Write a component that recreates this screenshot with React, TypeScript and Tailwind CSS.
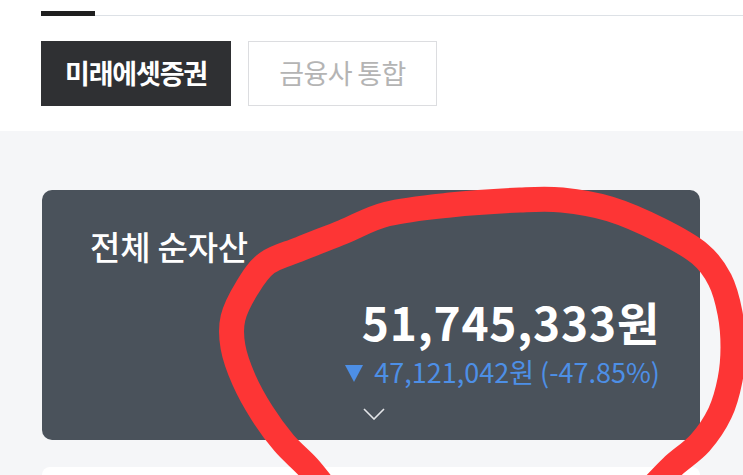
import React from 'react';

const font = { fontFamily: '"Noto Sans CJK KR", "Noto Sans", sans-serif' };

// hand-drawn marker loop, traced from the screenshot
const loop: [number, number][] = [
  [328, 492], [308, 467], [284, 443], [262, 413], [244, 380], [233, 347], [233, 318],
  [247, 288], [267, 263], [300, 249], [343, 232], [387, 214], [450, 205], [520, 200],
  [562, 200], [610, 209], [660, 230], [700, 254], [720, 280], [730, 313], [733, 347],
  [730, 380], [720, 413], [700, 443], [672, 467], [648, 492],
];

const smoothPath = (pts: [number, number][]) => {
  let d = `M ${pts[0][0]} ${pts[0][1]}`;
  for (let i = 0; i < pts.length - 1; i++) {
    const p0 = pts[i - 1] || pts[i];
    const p1 = pts[i];
    const p2 = pts[i + 1];
    const p3 = pts[i + 2] || p2;
    const c1 = [p1[0] + (p2[0] - p0[0]) / 6, p1[1] + (p2[1] - p0[1]) / 6];
    const c2 = [p2[0] - (p3[0] - p1[0]) / 6, p2[1] - (p3[1] - p1[1]) / 6];
    d += ` C ${c1[0]} ${c1[1]}, ${c2[0]} ${c2[1]}, ${p2[0]} ${p2[1]}`;
  }
  return d;
};

const RedCircle = () => (
  <svg
    className="absolute left-0 top-0 pointer-events-none"
    width={743}
    height={475}
    viewBox="0 0 743 475"
  >
    <path
      d={smoothPath(loop)}
      fill="none"
      stroke="#fd3535"
      strokeWidth={25}
      strokeLinecap="round"
      strokeLinejoin="round"
    />
  </svg>
);

export default function App() {
  return (
    <div className="relative w-[743px] h-[475px] overflow-hidden bg-[#f5f6f8]" style={font}>
      {/* top tabs */}
      <div className="bg-white pl-[41px] pt-[10px] pb-[25px]">
        <div className="flex items-end h-[6px]">
          <div className="w-[54px] h-[5px] bg-[#1f1f1f]" />
          <div className="flex-1 h-[1.5px] bg-[#dde1e6]" />
        </div>
        <div className="flex gap-[17px] mt-[25px]">
          <button className="w-[190px] h-[65px] bg-[#2f3033] text-white text-[27px] font-bold tracking-[-1.2px]">
            미래에셋증권
          </button>
          <button className="w-[189px] h-[65px] bg-white border border-[#dcdde0] text-[#b4b4b4] text-[27px] tracking-[-0.6px]">
            금융사 통합
          </button>
        </div>
      </div>

      {/* summary card */}
      <div className="px-[42px] pt-[59px]">
        <div className="w-[658px] h-[250px] rounded-[10px] bg-[#4a525b] pl-[48px] pr-[40px] pt-[36px] flex flex-col">
          <div className="text-white text-[33px] font-medium leading-[40px] tracking-[-0.2px]">전체 순자산</div>
          <div className="flex flex-col items-end mt-[27px]">
            <div className="text-white text-[46px] font-bold leading-[56px] tracking-[0.8px]">51,745,333원</div>
            <div className="flex items-center text-[#4d8fe6] text-[27px] leading-[32px] mt-[7px]">
              <svg width="18" height="18" viewBox="0 0 18 18" className="mr-[11px] mt-[2px]">
                <path d="M0 1 L18 1 L9 18 Z" fill="#4d8fe6" />
              </svg>
              <span>47,121,042원 (-47.85%)</span>
            </div>
          </div>
          <div className="pl-[273px] mt-[20px]">
            <svg width="22" height="12" viewBox="0 0 22 12" fill="none">
              <path d="M1 1 L11 11 L21 1" stroke="#e4e6e9" strokeWidth="1.6" />
            </svg>
          </div>
        </div>
        <div className="w-[658px] h-[40px] bg-white mt-[27px] rounded-t-[8px]" />
      </div>

      <RedCircle />
    </div>
  );
}
